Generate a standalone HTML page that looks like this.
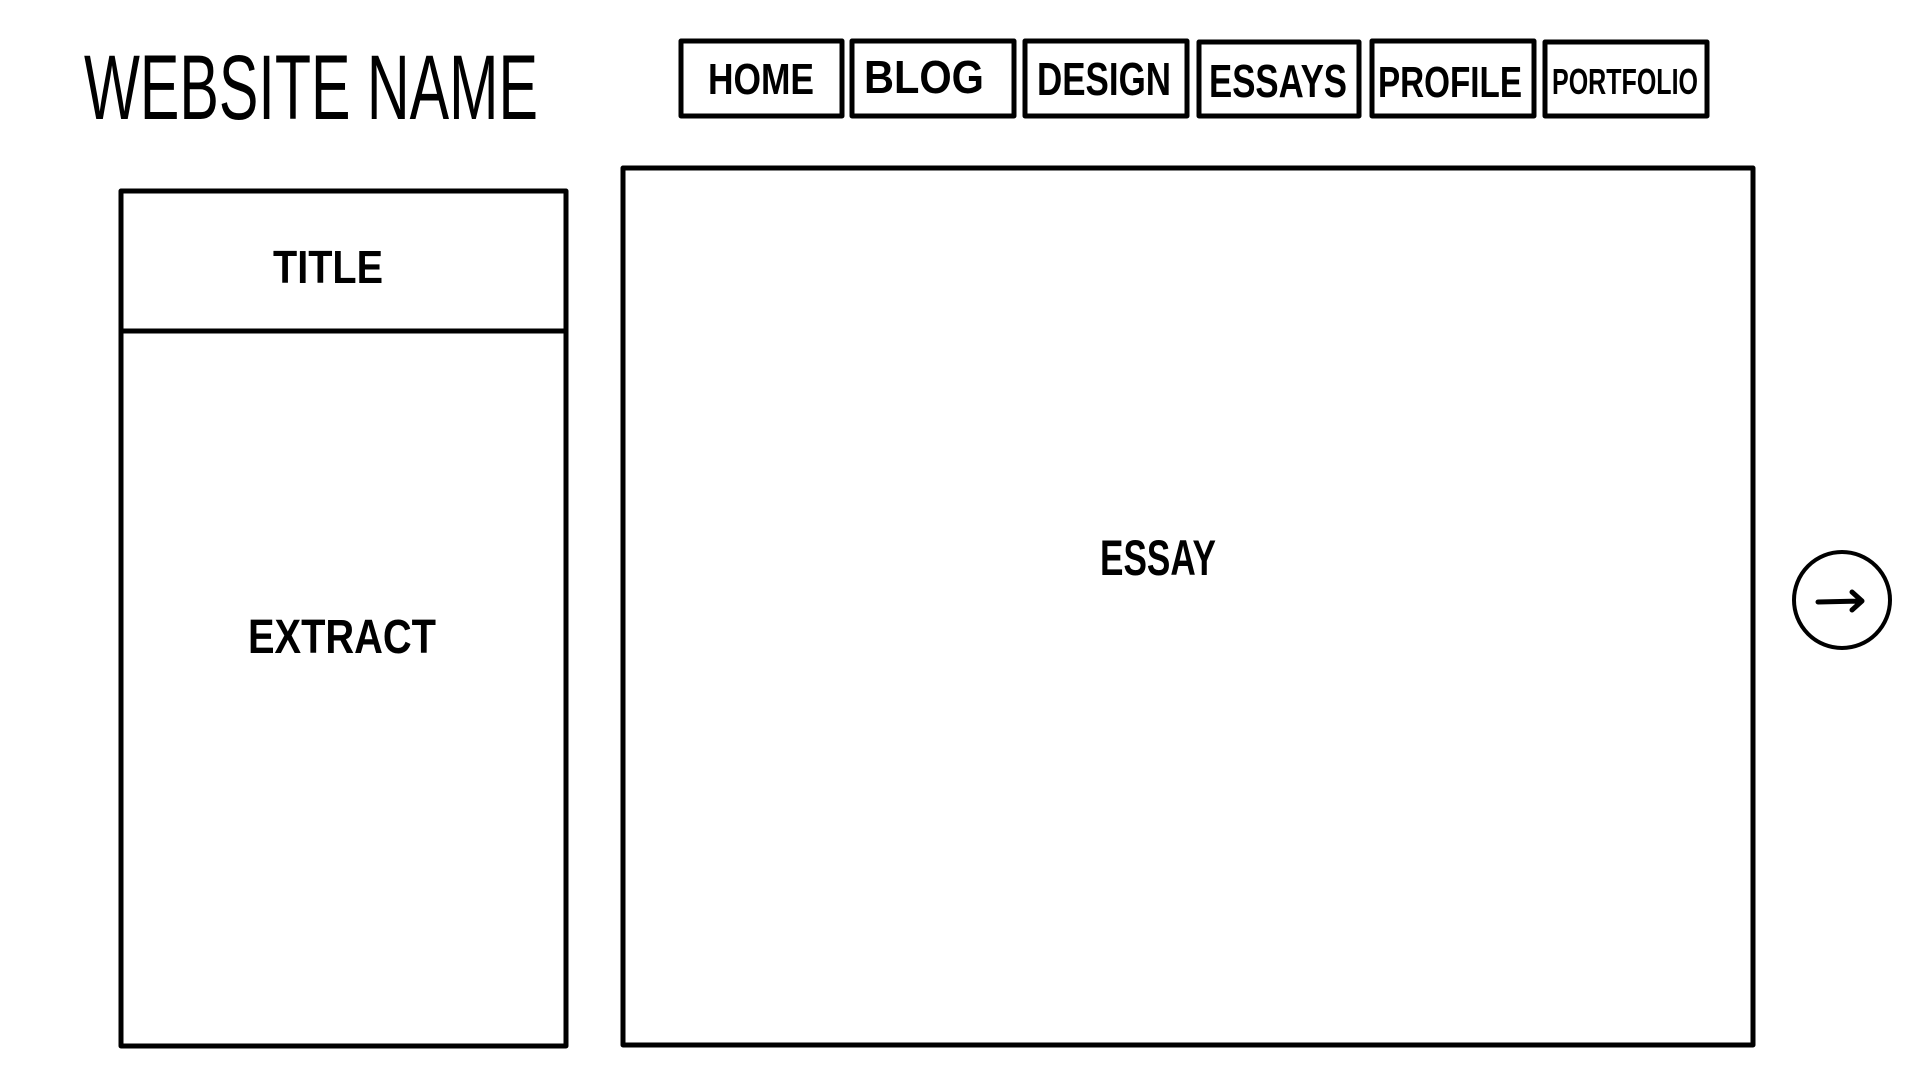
<!DOCTYPE html>
<html><head><meta charset="utf-8"><style>
html,body{margin:0;padding:0;background:#fff;width:1920px;height:1080px;overflow:hidden}
svg{display:block}
text{font-family:"Liberation Sans",sans-serif;fill:#000}
</style></head><body>
<svg width="1920" height="1080" viewBox="0 0 1920 1080" xmlns="http://www.w3.org/2000/svg">
<text x="84" y="119" font-size="92" textLength="454" lengthAdjust="spacingAndGlyphs">WEBSITE NAME</text>
<g fill="none" stroke="#000" stroke-width="5" stroke-linejoin="round">
<rect x="681" y="41" width="161" height="75"/>
<rect x="852" y="41" width="162" height="75"/>
<rect x="1025" y="41" width="162" height="75"/>
<rect x="1199" y="42" width="160" height="74"/>
<rect x="1372" y="41" width="162" height="75"/>
<rect x="1545" y="42" width="162" height="74"/>
<rect x="121" y="191" width="445" height="855"/>
<line x1="121" y1="331" x2="566" y2="331"/>
<rect x="623" y="168" width="1130" height="877"/>
<circle cx="1842" cy="600" r="48" stroke-width="4"/>
<path d="M1818 602 L1862 601 M1852 592 L1862 601 L1852 610" stroke-width="5" stroke-linecap="round"/>
</g>
<g font-weight="bold">
<text x="708" y="94" font-size="44" textLength="106" lengthAdjust="spacingAndGlyphs">HOME</text>
<text x="864" y="93" font-size="46" textLength="120" lengthAdjust="spacingAndGlyphs">BLOG</text>
<text x="1037" y="95" font-size="46" textLength="134" lengthAdjust="spacingAndGlyphs">DESIGN</text>
<text x="1209" y="97" font-size="46" textLength="138" lengthAdjust="spacingAndGlyphs">ESSAYS</text>
<text x="1378" y="97" font-size="44" textLength="144" lengthAdjust="spacingAndGlyphs">PROFILE</text>
<text x="1552" y="94" font-size="36" textLength="146" lengthAdjust="spacingAndGlyphs">PORTFOLIO</text>
<text x="273" y="283" font-size="46" textLength="110" lengthAdjust="spacingAndGlyphs">TITLE</text>
<text x="248" y="653" font-size="48" textLength="188" lengthAdjust="spacingAndGlyphs">EXTRACT</text>
<text x="1100" y="575" font-size="50" textLength="116" lengthAdjust="spacingAndGlyphs">ESSAY</text>
</g>
</svg>
</body></html>
